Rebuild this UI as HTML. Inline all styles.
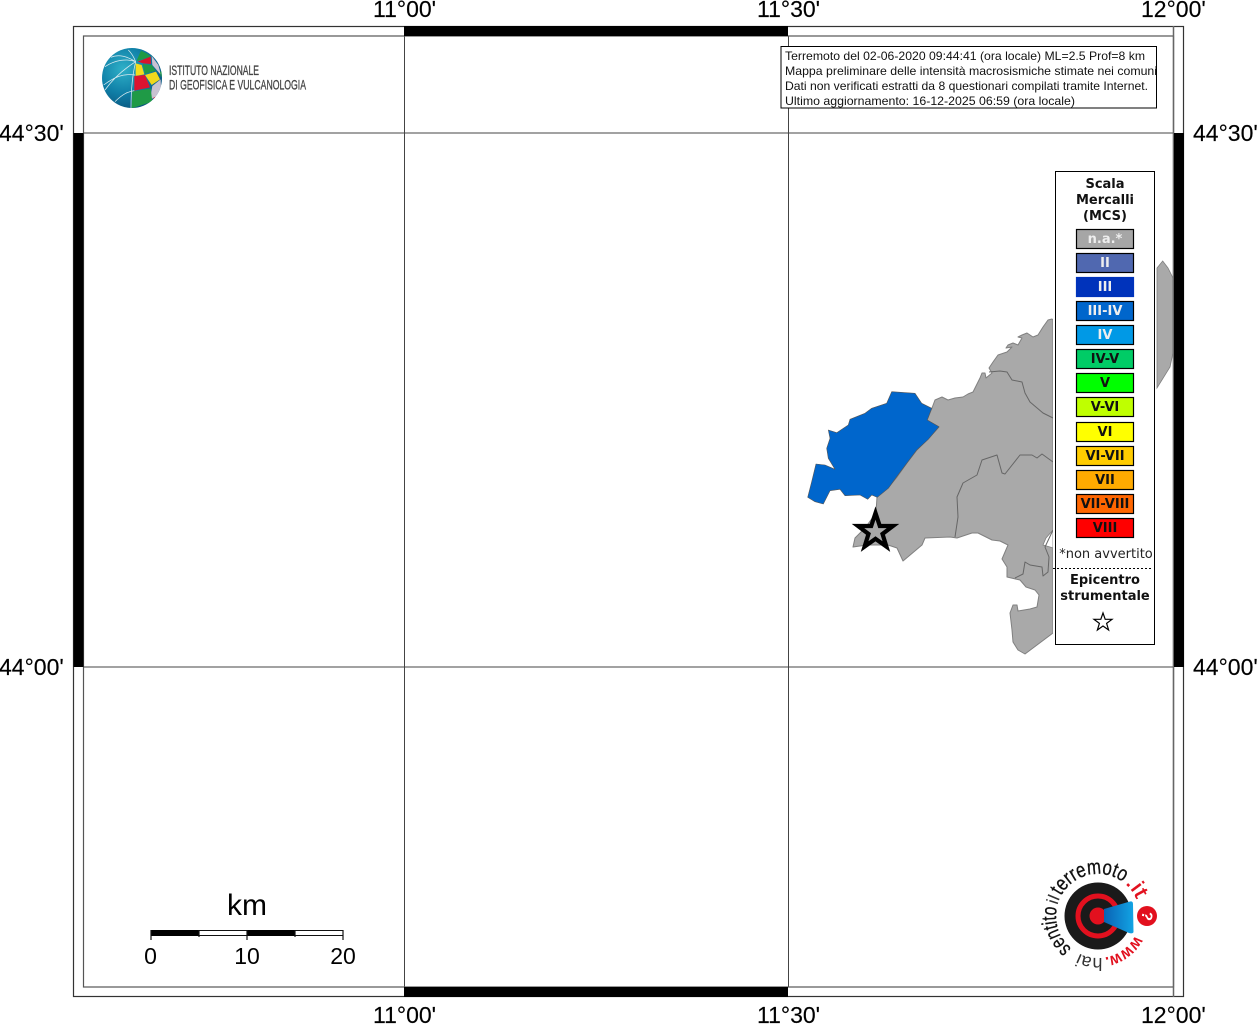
<!DOCTYPE html>
<html><head><meta charset="utf-8"><title>Mappa intensità</title>
<style>
html,body{margin:0;padding:0;background:#fff;width:1257px;height:1024px;overflow:hidden}
svg{display:block}
.ax{font-family:"Liberation Sans",sans-serif;font-size:23px;fill:#000;stroke:#000;stroke-width:.15}
.info{font-family:"Liberation Sans",sans-serif;font-size:12px;fill:#111}
.lg{font-family:"DejaVu Sans",sans-serif;font-size:13px;font-weight:bold;text-anchor:middle;fill:#111}
.sw{font-family:"DejaVu Sans",sans-serif;font-size:13px;font-weight:bold;text-anchor:middle}
.lf{font-family:"Liberation Sans",sans-serif;fill:#000}
</style></head><body>
<svg width="1257" height="1024" viewBox="0 0 1257 1024" xmlns="http://www.w3.org/2000/svg">
<defs>
<radialGradient id="gb" cx="35%" cy="35%" r="75%"><stop offset="0" stop-color="#2fb0c8"/><stop offset=".55" stop-color="#0f7ea6"/><stop offset="1" stop-color="#0a4f78"/></radialGradient>
<linearGradient id="cone" x1="0" y1="0" x2="1" y2="0"><stop offset="0" stop-color="#0a62b4"/><stop offset="1" stop-color="#12a4e4"/></linearGradient>
<clipPath id="gc"><circle cx="132" cy="78" r="30"/></clipPath>
<path id="arc" d="M1135.2 935.5 A42 42 0 1 1 1138.6 905"/>
</defs>

<!-- map -->
<path fill="#a9a9a9" stroke="#808080" stroke-width="1" stroke-linejoin="round" d="M877 497 L888 488 897 477 907 463 917 450 928 439 939 427 927 420 932 408 935 400 942 397 948 400 955 398 963 397 968 394 973 392 977 384 980 378 982 373 985 373 986 378 992 373 989 368 993 362 998 355 1007 352 1012 347 1006 348 1008 345 1013 343 1018 345 1022 338 1018 337 1022 335 1027 333 1033 337 1038 335 1043 327 1048 320 1052 319 1053 320 L1053 633 1025 654 1018 650 1013 642 1012 630 1010 613 1013 605 1017 605 1018 611 1030 609 1037 607 1039 595 1035 590 1026 587 1020 580 1007 577 1007 567 1002 559 1008 545 1000 541 992 540 978 533 972 533 957 538 950 537 925 538 922 545 903 561 897 548 888 545 867 545 853 547 855 538 865 528 876 513 Z"/>
<path fill="#fff" stroke="#808080" stroke-width=".8" d="M1053 530 L1046 538 1043 545 1050 547 1053 548Z"/>
<g fill="none" stroke="#666" stroke-width="1" stroke-linejoin="round">
<path d="M955 537 L958 517 957 497 963 483 977 475 982 460 997 455 1002 473 1005 474 1020 455 1032 455 1037 458 1042 454 1053 462"/>
<path d="M989 372 L1000 371 1007 372 1012 380 1022 382 1025 393 1030 402 1043 413 1053 418"/>
<path d="M1015 578 L1023 574 1025 562 1030 565 1042 567 1043 576 1048 572 1049 557 1045 547 1053 530"/>
</g>
<path fill="#a9a9a9" stroke="#808080" stroke-width=".8" d="M1157 268 L1162.7 261 1168 268 1173 278 1173 353 1170 367 1157 388Z"/>
<path fill="#0066cc" stroke="#555" stroke-width=".6" stroke-linejoin="round" d="M891.7 391.7 L915 393.3 921.7 403.3 931.7 408.3 927.3 420 939 426.7 928.3 439.3 916.7 450 906.7 463.3 896.7 476.7 888.3 488.3 877.3 497.3 871.7 495 867.7 499.3 860 495 845 495.7 840 489.3 830 490.7 823.3 504 815 501.7 807.7 497.3 811.7 481.7 816 464 825 465 835 469.3 828.3 458.3 826.7 448.3 830 438.3 828.3 430 836.7 432.7 848.3 425 850 419.3 865 413.3 871.7 408.3 886.7 403.3Z"/>
<polygon fill="#a9a9a9" stroke="#000" stroke-width="4.2" stroke-miterlimit="10" points="875.5,513 879.8,526 893,526 882.5,533.9 886.4,546.6 875.5,538.8 864.6,546.6 868.5,533.9 858,526 871.2,526"/>

<!-- frame -->
<g fill="none" stroke="#555">
<path d="M404.5 36V987M788.5 36V987M83.5 133H1173.5M83.5 667H1173.5" stroke="#444" stroke-width="1"/>
<rect x="73.5" y="26.5" width="1110" height="970" stroke="#333" stroke-width="1.2"/>
<rect x="83.5" y="36" width="1090" height="951" stroke="#555" stroke-width="1.2"/>
<path d="M1173.5 26V997" stroke="#666" stroke-width="1.5"/>
</g>
<g fill="#000">
<rect x="404" y="26" width="384" height="10"/><rect x="404" y="987" width="384" height="10"/>
<rect x="73.5" y="133" width="10" height="534"/><rect x="1174" y="133" width="10" height="534"/>
</g>
<g class="ax">
<text x="373" y="17">11°00'</text><text x="757" y="17">11°30'</text><text x="1141" y="17">12°00'</text>
<text x="373" y="1023">11°00'</text><text x="757" y="1023">11°30'</text><text x="1141" y="1023">12°00'</text>
<text x="-1" y="141">44°30'</text><text x="-1" y="675">44°00'</text>
<text x="1193" y="141">44°30'</text><text x="1193" y="675">44°00'</text>
</g>

<!-- info -->
<rect x="781" y="46.5" width="375.5" height="61.5" fill="#fff" stroke="#000" stroke-width="1"/>
<g class="info">
<text x="785" y="60" textLength="360" lengthAdjust="spacingAndGlyphs">Terremoto del 02-06-2020 09:44:41 (ora locale) ML=2.5 Prof=8 km</text>
<text x="785" y="75" textLength="372" lengthAdjust="spacingAndGlyphs">Mappa preliminare delle intensità macrosismiche stimate nei comuni</text>
<text x="785" y="90" textLength="363" lengthAdjust="spacingAndGlyphs">Dati non verificati estratti da 8 questionari compilati tramite Internet.</text>
<text x="785" y="105" textLength="290" lengthAdjust="spacingAndGlyphs">Ultimo aggiornamento: 16-12-2025 06:59 (ora locale)</text>
</g>

<!-- legend -->
<rect x="1053" y="165" width="103" height="490" fill="#fff"/>
<rect x="1055.5" y="171.5" width="99" height="473" fill="#fff" stroke="#000" stroke-width="1"/>
<text class="lg" x="1105" y="188">Scala</text><text class="lg" x="1105" y="204">Mercalli</text><text class="lg" x="1105" y="220">(MCS)</text>
<g stroke="#000" stroke-width="1.2">
<rect x="1076.5" y="229.5" width="57" height="19" fill="#a6a6a6"/>
<rect x="1076.5" y="253.5" width="57" height="19" fill="#5068b0"/>
<rect x="1076.5" y="277.5" width="57" height="19" fill="#0033bb" stroke="#0033bb"/>
<rect x="1076.5" y="301.5" width="57" height="19" fill="#0066cc"/>
<rect x="1076.5" y="325.5" width="57" height="19" fill="#0099e6"/>
<rect x="1076.5" y="349.5" width="57" height="19" fill="#00cc66"/>
<rect x="1076.5" y="373.5" width="57" height="19" fill="#00ff00"/>
<rect x="1076.5" y="397.5" width="57" height="19" fill="#bfff00"/>
<rect x="1076.5" y="422.5" width="57" height="19" fill="#ffff00"/>
<rect x="1076.5" y="446.5" width="57" height="19" fill="#ffcc00"/>
<rect x="1076.5" y="470.5" width="57" height="19" fill="#ffaa00"/>
<rect x="1076.5" y="494.5" width="57" height="19" fill="#ff6600"/>
<rect x="1076.5" y="518.5" width="57" height="19" fill="#ff0000"/>
</g>
<g class="sw" fill="#eee">
<text x="1105" y="243">n.a.*</text><text x="1105" y="267">II</text><text x="1105" y="291">III</text><text x="1105" y="315">III-IV</text><text x="1105" y="339">IV</text>
</g>
<g class="sw" fill="#111">
<text x="1105" y="363">IV-V</text><text x="1105" y="387">V</text><text x="1105" y="411">V-VI</text><text x="1105" y="436">VI</text><text x="1105" y="460">VI-VII</text><text x="1105" y="484">VII</text><text x="1105" y="508">VII-VIII</text><text x="1105" y="532">VIII</text>
</g>
<text x="1106" y="558" text-anchor="middle" style="font-family:'DejaVu Sans',sans-serif;font-size:13px;fill:#222">*non avvertito</text>
<line x1="1053" y1="568.5" x2="1152" y2="568.5" stroke="#000" stroke-width="1" stroke-dasharray="2 2"/>
<text class="lg" x="1105" y="584">Epicentro</text><text class="lg" x="1105" y="600">strumentale</text>
<polygon fill="#fff" stroke="#000" stroke-width="1.2" points="1103,613 1105.2,619.3 1112,619.3 1106.6,623.4 1108.6,630 1103,626 1097.4,630 1099.4,623.4 1094,619.3 1100.8,619.3"/>

<!-- INGV logo -->
<circle cx="132" cy="78" r="30" fill="url(#gb)"/>
<g clip-path="url(#gc)">
<g transform="translate(95 40) scale(.33333)" fill="none" stroke="#dcebf0" stroke-width="2.2">
<path d="M122 65 C116 50 108 38 100 30M122 65 C90 85 55 115 30 150M122 65 C112 105 108 150 108 205M122 65 C95 48 70 42 48 52M30 80 C60 60 95 55 122 65M26 135 C60 110 85 100 120 105M60 185 C85 160 100 155 118 152"/>
</g>
<g transform="translate(95 40) scale(.33333)">
<polygon fill="#1f9a46" points="125,62 138,32 155,40 168,50 130,62"/>
<polygon fill="#d8142c" points="128,65 167,50 168,72 145,70"/>
<polygon fill="#c9c2d2" points="170,48 190,75 198,105 172,75"/>
<polygon fill="#f4dc1c" points="122,70 140,75 148,103 122,108"/>
<polygon fill="#1f9a46" points="143,72 170,75 182,92 150,102"/>
<polygon fill="#f0d81c" points="150,105 183,95 195,118 170,135"/>
<polygon fill="#dc1430" points="118,108 150,105 165,142 118,152"/>
<polygon fill="#c9c2d2" points="172,138 197,118 198,145 182,172 165,178"/>
<polygon fill="#1f9a46" points="112,155 167,145 172,185 110,205"/>
<polygon fill="#1f9a46" points="195,95 200,95 200,110 197,110"/>
<polygon fill="#dc1430" points="176,172 184,170 176,182"/>
</g>
</g>
<text x="169" y="75" textLength="90" lengthAdjust="spacingAndGlyphs" style="font-family:'Liberation Sans',sans-serif;font-size:13.5px;fill:#444;stroke:#444;stroke-width:.3">ISTITUTO NAZIONALE</text>
<text x="169" y="89.5" textLength="137" lengthAdjust="spacingAndGlyphs" style="font-family:'Liberation Sans',sans-serif;font-size:13.5px;fill:#444;stroke:#444;stroke-width:.3">DI GEOFISICA E VULCANOLOGIA</text>

<!-- scale -->
<text class="lf" x="247" y="915" text-anchor="middle" font-size="30">km</text>
<rect x="151" y="930.5" width="192" height="5" fill="#fff" stroke="#111" stroke-width="1"/>
<rect x="151" y="930" width="48" height="6" fill="#000"/><rect x="247" y="930" width="48" height="6" fill="#000"/>
<path d="M151 930V940M247 930V940M343 930V940M199 930V937M295 930V937" stroke="#111" stroke-width="1.2"/>
<g class="lf" font-size="23" text-anchor="middle"><text x="150.5" y="964">0</text><text x="247" y="964">10</text><text x="343" y="964">20</text></g>

<!-- haisentito logo -->
<circle cx="1098" cy="916" r="33.5" fill="#1a1a1a"/>
<circle cx="1098" cy="916" r="20" fill="none" stroke="#e2101e" stroke-width="5"/>
<circle cx="1098" cy="916" r="8.5" fill="#e2101e"/>
<path d="M1104 909 L1130 901.5 Q1133 901 1133 904 L1133.5 932 Q1133 934 1129 933 L1104 922Z" fill="url(#cone)"/>
<circle cx="1147" cy="916" r="10" fill="#e2101e"/>
<text x="1147" y="921" text-anchor="middle" transform="rotate(100 1147 916)" style="font-family:'Liberation Sans',sans-serif;font-size:15px;font-weight:bold;fill:#fff">?</text>
<g style="font-family:'Liberation Sans',sans-serif">
<text font-size="17" font-weight="bold" fill="#e2101e"><textPath href="#arc" startOffset="0" textLength="39" lengthAdjust="spacingAndGlyphs">www.</textPath></text>
<text font-size="18" fill="#333"><textPath href="#arc" startOffset="41" textLength="24" lengthAdjust="spacingAndGlyphs">hai</textPath></text>
<text font-size="21" fill="#111" stroke="#111" stroke-width=".3"><textPath href="#arc" startOffset="74" textLength="46" lengthAdjust="spacingAndGlyphs">sentito</textPath></text>
<text font-size="17" fill="#333"><textPath href="#arc" startOffset="122" textLength="8" lengthAdjust="spacingAndGlyphs">il</textPath></text>
<text font-size="21" fill="#111" stroke="#111" stroke-width=".3"><textPath href="#arc" startOffset="132" textLength="72" lengthAdjust="spacingAndGlyphs">terremoto</textPath></text>
<text font-size="21" fill="#e2101e" stroke="#e2101e" stroke-width=".3"><textPath href="#arc" startOffset="206" textLength="20" lengthAdjust="spacingAndGlyphs">.it</textPath></text>
</g>
</svg>
</body></html>
